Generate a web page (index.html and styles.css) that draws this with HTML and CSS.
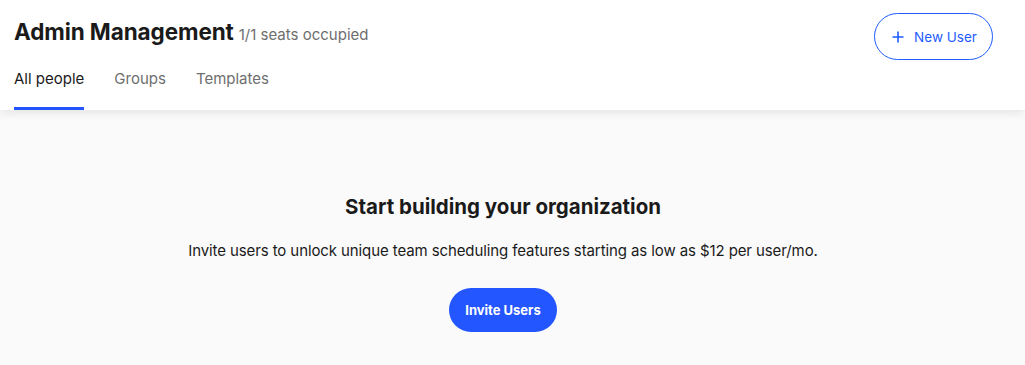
FILE: index.html
```html
<!DOCTYPE html>
<html>
<head>
<meta charset="utf-8">
<link rel="stylesheet" href="styles.css">
</head>
<body>
<header class="header">
  <div class="header-top">
    <div class="title-row">
      <h1 class="title">Admin Management</h1>
      <span class="seats">1/1 seats occupied</span>
    </div>
    <button class="new-user">
      <svg class="plus" width="12" height="12" viewBox="0 0 12 12"><path d="M6 0.5V11.5M0.5 6H11.5" stroke="#1f5cff" stroke-width="1.6" fill="none"/></svg>
      <span>New User</span>
    </button>
  </div>
  <nav class="tabs">
    <a class="tab active">All people</a>
    <a class="tab">Groups</a>
    <a class="tab">Templates</a>
  </nav>
</header>
<main class="main">
  <h2 class="empty-title">Start building your organization</h2>
  <p class="empty-text">Invite users to unlock unique team scheduling features starting as low as $12 per user/mo.</p>
  <button class="invite">Invite Users</button>
</main>
</body>
</html>
```
FILE: styles.css
```css
* { box-sizing: border-box; }
html, body { margin: 0; padding: 0; }
body {
  font-family: "Inter", "Lato", sans-serif;
  background: #fafafa;
  color: #1a1a1a;
  width: 1025px;
  height: 365px;
  overflow: hidden;
}
.header {
  background: #fff;
  height: 110px;
  padding: 0 32px 0 14px;
  box-shadow: 0 2px 10px rgba(0,0,0,0.10);
  position: relative;
  z-index: 1;
}
.header-top {
  display: flex;
  justify-content: space-between;
  align-items: flex-start;
  padding-top: 13px;
}
.title-row {
  display: flex;
  align-items: baseline;
  gap: 5px;
  padding-top: 5px;
}
.title {
  margin: 0;
  font-size: 22.5px;
  font-weight: 700;
  color: #1a1a1a;
  letter-spacing: -0.1px;
}
.seats {
  font-size: 15px;
  color: #6e6e6e;
  letter-spacing: 0;
}
.new-user {
  height: 47px;
  width: 119px;
  border: 1px solid #1f5cff;
  border-radius: 24px;
  background: #fff;
  color: #1f5cff;
  font-family: inherit;
  font-size: 13.5px;
  display: flex;
  align-items: center;
  justify-content: center;
  gap: 10px;
  padding: 0 0 0 2px;
}
.tabs {
  display: flex;
  gap: 30px;
  margin-top: 9px;
}
.tab {
  font-size: 15px;
  color: #6e6e6e;
  padding: 0 0 19px;
  border-bottom: 3px solid transparent;
  line-height: 19px;
}
.tab.active {
  color: #1a1a1a;
  border-bottom-color: #2255ff;
}
.main {
  display: flex;
  flex-direction: column;
  align-items: center;
  padding: 84px 19px 0 0;
}
.empty-title {
  margin: 0;
  font-size: 20.5px;
  font-weight: 700;
  color: #1a1a1a;
  line-height: 26px;
}
.empty-text {
  margin: 21px 0 0;
  font-size: 15px;
  letter-spacing: -0.1px;
  color: #1a1a1a;
  line-height: 20px;
}
.invite {
  margin-top: 27px;
  height: 44px;
  width: 108px;
  border: none;
  border-radius: 22px;
  background: #2456ff;
  color: #fff;
  font-family: inherit;
  font-weight: 700;
  font-size: 13px;
}
```
